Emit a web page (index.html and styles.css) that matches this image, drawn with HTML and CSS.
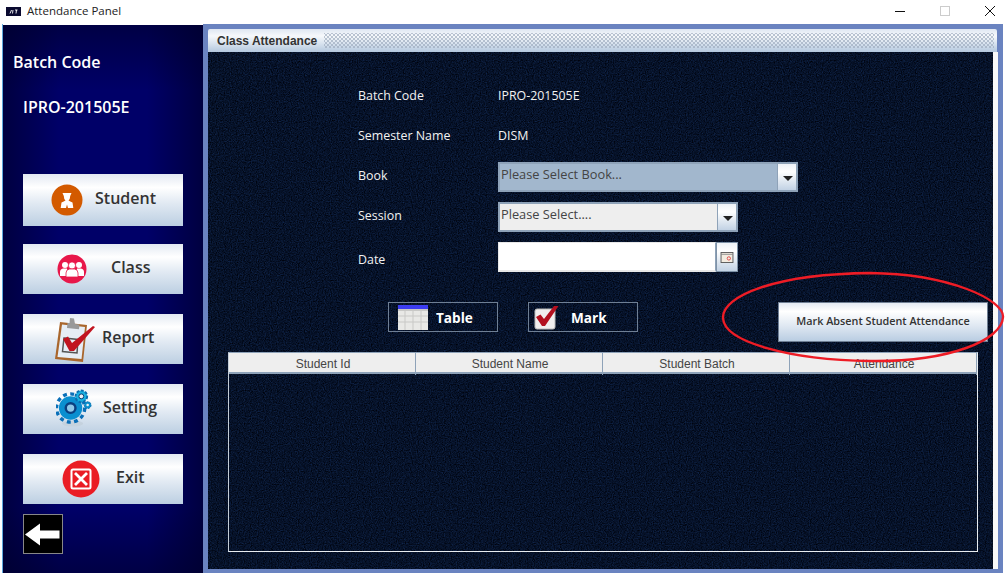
FILE: index.html
```html
<!DOCTYPE html>
<html lang="en">
<head>
<meta charset="utf-8">
<title>Attendance Panel</title>
<link rel="stylesheet" href="styles.css">
</head>
<body>
<div class="window">
  <header class="titlebar">
    <svg class="app-icon" viewBox="0 0 15 9"><rect width="15" height="9" fill="#0a0a30"/><path d="M4 6.500 5.500 3M6.500 6.500 7 3M9 3h2.500M10.500 3 10 6.500" stroke="#fff" stroke-width=".9" fill="none"/></svg>
    <span class="app-title">Attendance Panel</span>
    <div class="win-controls">
      <svg class="win-btn" viewBox="0 0 10 10"><path d="M0 5.500h10" stroke="#111" stroke-width="1"/></svg>
      <svg class="win-btn" viewBox="0 0 10 10"><rect x=".5" y=".5" width="9" height="9" fill="none" stroke="#ccc"/></svg>
      <svg class="win-btn" viewBox="0 0 10 10"><path d="M0 0 10 10M10 0 0 10" stroke="#111" stroke-width="1"/></svg>
    </div>
  </header>

  <div class="main">
    <aside class="sidebar">
      <div class="side-heading">Batch Code</div>
      <div class="side-batch">IPRO-201505E</div>
      <nav class="side-nav">
        <a class="side-btn side-student">
          <svg class="ico-student" viewBox="0 0 32 32"><circle cx="16" cy="16" r="15.500" fill="#d35a00"/><path d="M11.500 9h9l-1.300 3q0 2.800-1.700 4.500l1.800 1 2.200 1 .8 5.500h-5.300l-1-3.500-1 3.500h-5.300l.8-5.500 2.200-1 1.800-1q-1.700-1.700-1.700-4.500z" fill="#fff"/></svg>
          <span>Student</span>
        </a>
        <a class="side-btn side-class">
          <svg class="ico-class" viewBox="0 0 30 32"><circle cx="15" cy="16" r="14.500" fill="#e8174a"/><g fill="#fff"><circle cx="8" cy="12" r="3"/><circle cx="22" cy="12" r="3"/><path d="M3 23v-4q0-3 3-3.500h4v7.500zM27 23v-4q0-3-3-3.500h-4v7.500z"/><circle cx="15" cy="12.500" r="3.600" stroke="#e8174a" stroke-width=".8"/><path d="M9 24v-4q0-3.500 3.500-4h5q3.500.5 3.500 4v4z" stroke="#e8174a" stroke-width=".8"/></g></svg>
          <span>Class</span>
        </a>
        <a class="side-btn side-report">
          <svg class="ico-report" viewBox="0 0 42 48"><path d="M6 7 33 10 29 47 1 44z" fill="#a9662c"/><path d="M8 9.500 31 12 27.500 44 3.500 42z" fill="#e6edf5"/><path d="M10 23 24 24.500 23 38 8.500 36.500z" fill="none" stroke="#555" stroke-width="1.500"/><path d="M13 13 25 14.300 25.500 9.500 21 9 20 3.500 16 3 15.500 8 13.500 8z" fill="#999"/><path d="M9 24 14 21.500 18 28 39 11 41 12 20 36 15.500 36z" fill="#c11420"/></svg>
          <span>Report</span>
        </a>
        <a class="side-btn side-setting">
          <svg class="ico-setting" viewBox="0 0 38 42"><ellipse cx="17" cy="36" rx="11" ry="3" fill="#c5d2de"/><circle cx="15" cy="20" r="12" fill="#0a8fd0"/><circle cx="15" cy="20" r="14.500" fill="none" stroke="#0a6fb8" stroke-width="3.500" stroke-dasharray="4 3.500"/><circle cx="15" cy="20" r="5" fill="#8fc8e8" stroke="#0b3f80" stroke-width="2.500"/><circle cx="26" cy="8" r="6" fill="#18b0e0" stroke="#0a6fb0" stroke-width="2" stroke-dasharray="3 1.500"/><circle cx="26" cy="8" r="2.500" fill="#e8f0f6" stroke="#063a70"/><circle cx="32.500" cy="17" r="3.500" fill="#0a90cc" stroke="#0a6fb0" stroke-dasharray="2 1"/><circle cx="32.500" cy="17" r="1.300" fill="#e8f0f6"/></svg>
          <span>Setting</span>
        </a>
        <a class="side-btn side-exit">
          <svg class="ico-exit" viewBox="0 0 38 38"><circle cx="19" cy="19" r="18.500" fill="#ea1c24"/><rect x="9.500" y="9.500" width="19" height="19" rx="1.500" fill="none" stroke="#fff" stroke-width="2"/><path d="M13 13 25 25M25 13 13 25" stroke="#fff" stroke-width="2.800"/></svg>
          <span>Exit</span>
        </a>
      </nav>
      <a class="back-btn">
        <svg class="ico-back" viewBox="0 0 36 22"><path d="M0 11 15 0v7h19.500v8H15v7z" fill="#fff"/></svg>
      </a>
    </aside>

    <section class="panel">
      <div class="panel-frame">
        <div class="panel-title">
          <span class="panel-title-text">Class Attendance</span>
          <span class="panel-dots"></span>
        </div>
        <div class="panel-body">
          <div class="form">
            <div class="form-row"><span class="label">Batch Code</span><span class="value">IPRO-201505E</span></div>
            <div class="form-row"><span class="label">Semester Name</span><span class="value">DISM</span></div>
            <div class="form-row">
              <span class="label">Book</span>
              <div class="combo combo-book"><span class="combo-text">Please Select Book...</span><span class="combo-arrow"><i class="caret"></i></span></div>
            </div>
            <div class="form-row">
              <span class="label">Session</span>
              <div class="combo combo-session"><span class="combo-text">Please Select....</span><span class="combo-arrow"><i class="caret"></i></span></div>
            </div>
            <div class="form-row">
              <span class="label label-date">Date</span>
              <div class="date-field"><span class="date-input"></span>
                <span class="date-btn"><svg class="ico-cal" viewBox="0 0 14 12"><rect x=".5" y=".5" width="13" height="11" fill="#f3ece0" stroke="#555"/><path d="M.5 2.500h13" stroke="#888"/><circle cx="9" cy="7" r="1.800" fill="none" stroke="#d44"/></svg></span>
              </div>
            </div>
          </div>

          <div class="actions">
            <a class="tool-btn">
              <svg class="ico-table" viewBox="0 0 30 25"><rect width="30" height="25" fill="#e8e8e6"/><rect width="30" height="4" fill="#3c3cf0"/><path d="M0 4.500h30v1H0zM7 5v20M15 5v20M23 5v20M0 11h30M0 17h30" stroke="#c8c8c6" fill="none"/></svg>
              <span>Table</span>
            </a>
            <a class="tool-btn tool-mark">
              <svg class="ico-mark" viewBox="0 0 25 25"><rect x="1" y="4" width="20" height="20" rx="2" fill="#f0eeee" stroke="#bbb"/><path d="M2 12 6.500 9.500 10 14 20 1h4.500L11 21H8z" fill="#b3101f"/></svg>
              <span>Mark</span>
            </a>
            <a class="absent-btn"><span class="absent-label">Mark Absent Student Attendance</span></a>
          </div>

          <div class="table">
            <div class="thead">
              <span class="th">Student Id</span>
              <span class="th">Student Name</span>
              <span class="th">Student Batch</span>
              <span class="th">Attendance</span>
            </div>
          </div>
        </div>
      </div>
    </section>
  </div>
</div>
<svg class="annotation" viewBox="0 0 1008 575"><path d="M723 318C722 296 775 274 870 273C950 274 1004 300 1003 317C1002 340 950 362 870 361C790 360 724 342 723 318Z" fill="none" stroke="#ee1c25" stroke-width="2.400"/></svg>
</body>
</html>
```

FILE: styles.css
```css
* { box-sizing: border-box; }
html, body { margin: 0; height: 100%; overflow: hidden; background: #fff; }
body { position: relative; font-family: "Open Sans", "Liberation Sans", sans-serif; }
.window { width: 1008px; height: 575px; display: flex; flex-direction: column; }

.titlebar { height: 24px; display: flex; align-items: center; background: #fff; padding-left: 6px; }
.app-icon { width: 15px; height: 9px; margin-top: -2px; }
.app-title { margin-left: 6px; font-size: 11.500px; color: #222; margin-top: -3px; }
.win-controls { margin-left: auto; display: flex; gap: 35px; padding-right: 13px; margin-top: -2px; }
.win-btn { width: 10px; height: 10px; display: block; }

.main { height: 549px; display: flex; padding-left: 3px; background: linear-gradient(90deg, #fff 2px, #5fa8dc 2px, #5fa8dc 3px, transparent 3px); }

.sidebar {
  width: 200px; height: 549px; flex: none; padding: 0 20px;
  background:
    linear-gradient(180deg, rgba(0,0,40,.55), transparent 12%, transparent 88%, rgba(0,0,40,.55)),
    linear-gradient(90deg, #000040, #000068 28%, #000068 72%, #000040);
  border-top: 1px solid #fff;
  color: #fff;
}
.side-heading { font-weight: 600; font-size: 16px; margin: 27px 0 0 -10px; line-height: 20px; }
.side-batch { font-weight: 600; font-size: 16px; line-height: 20px; margin-top: 25px; }
.side-nav { display: flex; flex-direction: column; gap: 20px; margin-top: 57px; }
.side-btn {
  width: 160px; height: 50px; display: flex; align-items: center;
  font-weight: 600; font-size: 16px; color: #333;
  background: linear-gradient(180deg, #e3e9f2 0%, #fff 26%, #e2eaf3 55%, #bccfe2 100%);
}
.side-btn span { margin-top: -5px; }
.side-student { height: 52px; margin-bottom: -2px; padding-left: 28px; gap: 12px; }
.side-class { padding-left: 34px; gap: 24px; }
.side-report { padding-left: 31px; gap: 6px; }
.side-setting { padding-left: 33px; gap: 10px; }
.side-exit { padding-left: 39px; gap: 16px; }
.ico-student { width: 32px; height: 32px; }
.ico-class { width: 30px; height: 32px; }
.ico-report { width: 42px; height: 48px; }
.ico-setting { width: 37px; height: 42px; }
.ico-exit { width: 38px; height: 38px; }
.back-btn { width: 40px; height: 40px; margin-top: 10px; background: #000; border: 1px solid #888; display: flex; align-items: center; justify-content: center; }
.ico-back { width: 36px; height: 23px; }

.panel { width: 800px; height: 549px; flex: none; background: #6a83c0; padding: 5px 5px 4px 5px; }
.panel-frame { height: 540px; display: flex; flex-direction: column; }
.panel-title {
  height: 23px; flex: none; display: flex; align-items: center; margin-right: 1px;
  background: linear-gradient(180deg, #dfe7f2 0%, #f6f8fb 30%, #dbe5f0 60%, #b4c8de 100%);
  border-radius: 2px 2px 0 0;
}
.panel-title-text { font-family: "Liberation Sans", Arial, sans-serif; font-weight: 700; font-size: 12px; color: #333; margin-left: 9px; }
.panel-dots {
  flex: 1; height: 15px; margin: 0 3px 0 7px;
  background-image: radial-gradient(#9aa8bb .6px, transparent .9px), radial-gradient(#9aa8bb .6px, transparent .9px);
  background-size: 4px 4px; background-position: 0 0, 2px 2px;
}
.panel-body {
  flex: 1; padding-top: 23px; border-right: 5px solid #f8f8f8;
  background-color: #06122a;
  background-image: url("data:image/svg+xml,%3Csvg xmlns='http://www.w3.org/2000/svg' width='256' height='256'%3E%3Cfilter id='n' color-interpolation-filters='sRGB'%3E%3CfeTurbulence type='fractalNoise' baseFrequency='.85' numOctaves='2' seed='4'/%3E%3CfeColorMatrix values='.1 0 0 0 -.026  .2 0 0 0 -.03  .36 0 0 0 -.02  0 0 0 0 1'/%3E%3C/filter%3E%3Crect width='256' height='256' filter='url(%23n)'/%3E%3C/svg%3E");
}

.form { margin-left: 150px; color: #f2f2f2; font-size: 12.400px; }
.form-row { height: 40px; display: flex; align-items: center; }
.label { width: 140px; flex: none; }
.label-date { margin-top: 8px; }
.combo { height: 30px; margin-top: 4px; display: flex; border: 2px solid #8ea2b8; color: #444; }
.combo-book { width: 300px; background: #a2b7cd; }
.combo-session { width: 240px; background: #eee; }
.combo-text { flex: 1; padding-left: 1px; line-height: 21px; font-size: 12.800px; }
.combo-arrow {
  width: 19px; flex: none; display: flex; align-items: center; justify-content: center; padding-left: 1px;
  border-left: 1px solid #8ea2b8;
  background: linear-gradient(180deg, #eef2f7, #fff 30%, #c2d2e4);
}
.caret { width: 0; height: 0; border-left: 5px solid transparent; border-right: 5px solid transparent; border-top: 5px solid #222; margin-top: 2px; }
.date-field { height: 30px; margin-top: 4px; display: flex; width: 240px; }
.date-input { width: 218px; background: #fff; border: 1px solid #e8e8e8; border-right-color: #8ea2b8; border-bottom-width: 2px; }
.date-btn { width: 22px; display: flex; align-items: center; justify-content: center; border: 1px solid #7f93a8; background: linear-gradient(180deg, #eef2f7, #fff 30%, #c2d2e4); }
.ico-cal { width: 14px; height: 11px; }

.actions { display: flex; margin-top: 27px; padding-left: 180px; height: 40px; }
.tool-btn {
  width: 110px; height: 30px; display: flex; align-items: center; gap: 8px; padding-left: 9px;
  border: 1px solid #6f7f94; color: #fff; font-weight: 700; font-size: 13.600px;
}
.tool-mark { margin-left: 30px; padding-left: 5px; gap: 12px; }
.ico-table { width: 30px; height: 25px; }
.ico-mark { width: 25px; height: 25px; }
.absent-btn {
  width: 210px; height: 40px; margin-left: 140px; display: flex; align-items: center; justify-content: center;
  border: 1px solid #6f7f94; color: #333; font-weight: 600; font-size: 10.800px;
  background: linear-gradient(180deg, #e3e9f2 0%, #fff 22%, #dfe8f2 60%, #b9cde2 100%);
}
.absent-label { margin-top: -4px; }

.table { width: 750px; height: 200px; margin: 10px 0 0 20px; border: 1px solid #e8ecf0; border-top-color: #8ea2b8; border-left-color: #c5ced8; }
.thead { display: grid; grid-template-columns: repeat(4, 1fr); height: 21px; background: #eee; border-bottom: 2px solid #8ea2b8; }
.th { font-family: "Liberation Sans", Arial, sans-serif; font-size: 12px; color: #444; text-align: center; line-height: 22px; padding-left: 2px; border-right: 1px solid #8ea2b8; }

.annotation { position: absolute; left: 0; top: 0; width: 1008px; height: 575px; pointer-events: none; }
```
